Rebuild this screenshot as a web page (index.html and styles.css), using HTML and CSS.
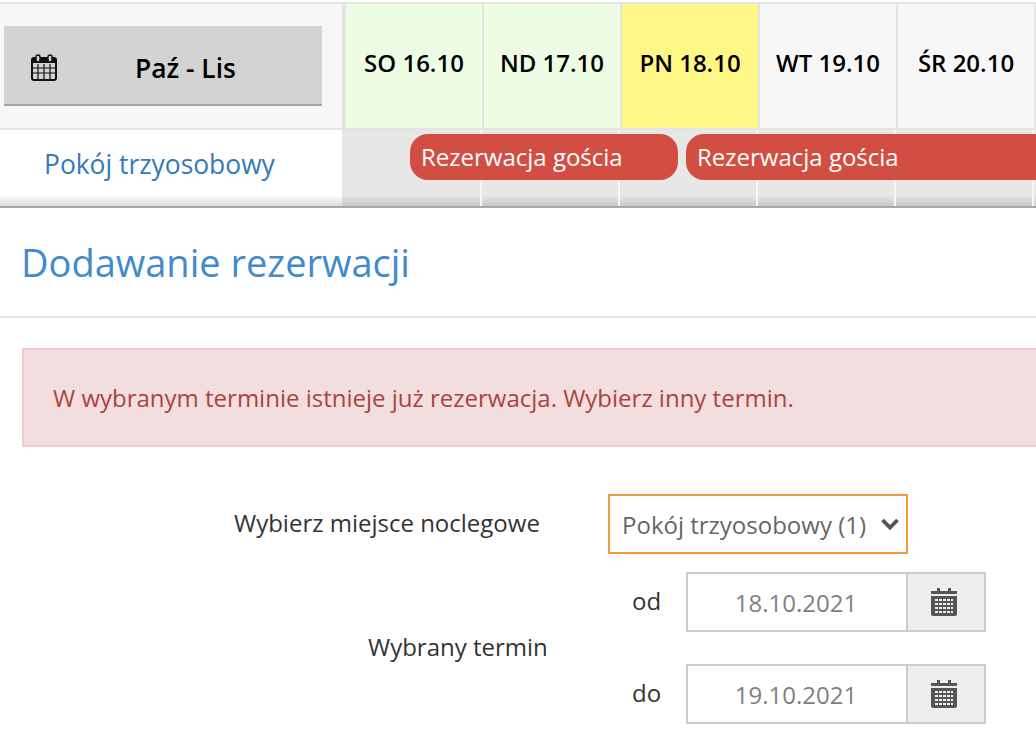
FILE: index.html
```html
<!DOCTYPE html>
<html lang="pl">
<head>
    <title>Dodawanie rezerwacji</title>
    <link rel="stylesheet" href="styles.css">
</head>
<body>
    <div class="calendar">
        <div class="calendar-head">
            <div class="month-cell">
                <div class="month-btn">
                    <svg class="month-icon" viewBox="0 0 26 27" width="26" height="27">
                        <rect x="1" y="4" width="24" height="22" rx="2" fill="none" stroke="#111" stroke-width="2"/>
                        <rect x="1" y="4" width="24" height="5" fill="#111"/>
                        <path d="M7 10v15M13 10v15M19 10v15M2 14h22M2 19h22" stroke="#111" stroke-width="1.2"/>
                        <rect x="5" y="1" width="4" height="7" rx="2" fill="#d3d3d3" stroke="#111" stroke-width="1.4"/>
                        <rect x="17" y="1" width="4" height="7" rx="2" fill="#d3d3d3" stroke="#111" stroke-width="1.4"/>
                    </svg>
                    <span class="month-name">Paź - Lis</span>
                </div>
            </div>
            <div class="day weekend">SO 16.10</div>
            <div class="day weekend">ND 17.10</div>
            <div class="day today">PN 18.10</div>
            <div class="day">WT 19.10</div>
            <div class="day">ŚR 20.10</div>
        </div>
        <div class="calendar-row">
            <div class="room-name">Pokój trzyosobowy</div>
            <div class="slots">
                <div class="slot"></div>
                <div class="slot"></div>
                <div class="slot"></div>
                <div class="slot"></div>
                <div class="slot"></div>
                <div class="booking booking-first">Rezerwacja gościa</div>
                <div class="booking booking-second">Rezerwacja gościa</div>
            </div>
        </div>
    </div>

    <div class="panel">
        <h2 class="panel-title">Dodawanie rezerwacji</h2>
        <div class="panel-body">
            <div class="alert">W wybranym terminie istnieje już rezerwacja. Wybierz inny termin.</div>

            <div class="place-row">
                <label class="place-label">Wybierz miejsce noclegowe</label>
                <div class="select-box">
                    <span>Pokój trzyosobowy (1)</span>
                    <svg viewBox="0 0 20 14" width="20" height="14">
                        <path d="M2.5 3L10 10.5 17.5 3" fill="none" stroke="#555" stroke-width="3.8"/>
                    </svg>
                </div>
            </div>

            <div class="term-row">
                <label class="term-label">Wybrany termin</label>
                <div class="term-dates">
                    <div class="date-row">
                        <span class="date-label">od</span>
                        <div class="date-input">
                            <span class="date-value">18.10.2021</span>
                            <span class="date-addon">
                                <svg viewBox="0 0 26 28" width="26" height="28">
                                    <path d="M6 0h3v3h8V0h3v3h6v3H0V3h6z" fill="#555"/>
                                    <path d="M0 8h26v18a2 2 0 0 1-2 2H2a2 2 0 0 1-2-2z" fill="#555"/>
                                    <path d="M4 12h18M4 16h18M4 20h18M4 24h18" stroke="#eee" stroke-width="2" stroke-dasharray="3 1"/>
                                </svg>
                            </span>
                        </div>
                    </div>
                    <div class="date-row">
                        <span class="date-label">do</span>
                        <div class="date-input">
                            <span class="date-value">19.10.2021</span>
                            <span class="date-addon">
                                <svg viewBox="0 0 26 28" width="26" height="28">
                                    <path d="M6 0h3v3h8V0h3v3h6v3H0V3h6z" fill="#555"/>
                                    <path d="M0 8h26v18a2 2 0 0 1-2 2H2a2 2 0 0 1-2-2z" fill="#555"/>
                                    <path d="M4 12h18M4 16h18M4 20h18M4 24h18" stroke="#eee" stroke-width="2" stroke-dasharray="3 1"/>
                                </svg>
                            </span>
                        </div>
                    </div>
                </div>
            </div>
        </div>
    </div>
</body>
</html>
```

FILE: styles.css
```css
html, body {
    height: 736px;
    overflow: hidden;
}

body {
    margin: 0;
    font-family: "Open Sans", sans-serif;
    background-color: #fff;
    color: #333;
}

* {
    box-sizing: border-box;
}

.calendar {
    padding-top: 2px;
    background-color: #fff;
}

.calendar-head {
    display: flex;
    height: 128px;
    border-top: 2px solid #e4e4e4;
    border-bottom: 2px solid #e4e4e4;
    background-color: #f7f7f7;
}

.month-cell {
    width: 346px;
    flex: none;
    padding: 22px 0 0 4px;
    border-right: 4px solid #e4e4e4;
}

.month-btn {
    display: flex;
    align-items: center;
    width: 318px;
    height: 80px;
    padding: 4px 0 0 27px;
    background-color: #d3d3d3;
    border-bottom: 2px solid #a6a6a6;
}

.month-name {
    margin-left: 78px;
    padding-top: 2px;
    font-size: 26.4px;
    font-weight: 600;
    color: #000;
}

.day {
    display: flex;
    align-items: center;
    justify-content: center;
    width: 138px;
    flex: none;
    padding-bottom: 8px;
    border-right: 2px solid #e4e4e4;
    font-size: 24px;
    font-weight: 600;
    color: #000;
}

.weekend {
    background-color: #effce4;
}

.today {
    background-color: #fff785;
}

.calendar-row {
    display: flex;
    height: 78px;
    border-bottom: 2px solid #a8a8a8;
}

.room-name {
    width: 342px;
    padding: 16px 0 0 44px;
    font-size: 26.4px;
    color: #337ab7;
    background: linear-gradient(#fff 85%, #dcdcdc);
}

.slots {
    position: relative;
    display: flex;
    flex: 1;
    padding-left: 2px;
    background: linear-gradient(#e7e7e7 85%, #c9c9c9);
}

.slot {
    width: 138px;
    flex: none;
    border-right: 2px solid #f7f7f7;
}

.booking {
    position: absolute;
    top: 4px;
    height: 46px;
    padding: 6px 0 0 11px;
    font-size: 24px;
    color: #fff;
    background-color: #d34e42;
    white-space: nowrap;
}

.booking-first {
    left: 68px;
    width: 268px;
    border-radius: 18px;
}

.booking-second {
    left: 344px;
    right: 0;
    border-radius: 18px 0 0 18px;
}

.panel-title {
    margin: 0;
    height: 110px;
    padding: 28px 0 0 21px;
    border-bottom: 2px solid #e5e5e5;
    font-size: 38px;
    font-weight: 400;
    color: #428bca;
}

.panel-body {
    padding: 30px 0 0 22px;
}

.alert {
    height: 99px;
    padding: 31px 0 0 29px;
    border: 2px solid #ebccd1;
    border-right: none;
    background-color: #f2dede;
    font-size: 24px;
    color: #a94442;
}

.place-row {
    display: flex;
    margin-top: 47px;
}

.place-label {
    width: 586px;
    padding: 12px 0 0 212px;
    font-size: 24px;
}

.select-box {
    display: flex;
    align-items: center;
    justify-content: space-between;
    width: 300px;
    height: 60px;
    padding: 0 6px 0 12px;
    border: 2px solid #f0993f;
    font-size: 24px;
    color: #666;
}

.term-row {
    display: flex;
    margin-top: 18px;
}

.term-label {
    width: 610px;
    padding: 58px 0 0 346px;
    font-size: 24px;
}

.date-row {
    display: flex;
    align-items: center;
    margin-bottom: 32px;
}

.date-label {
    width: 54px;
    font-size: 24px;
    padding-bottom: 4px;
}

.date-input {
    display: flex;
    width: 300px;
    height: 60px;
    border: 2px solid #ccc;
}

.date-value {
    flex: 1;
    padding-top: 12px;
    padding-right: 2px;
    font-size: 24px;
    text-align: center;
    color: #808080;
}

.date-addon {
    display: flex;
    align-items: center;
    justify-content: center;
    width: 78px;
    padding-right: 4px;
    border-left: 2px solid #ccc;
    background-color: #eee;
}
```
